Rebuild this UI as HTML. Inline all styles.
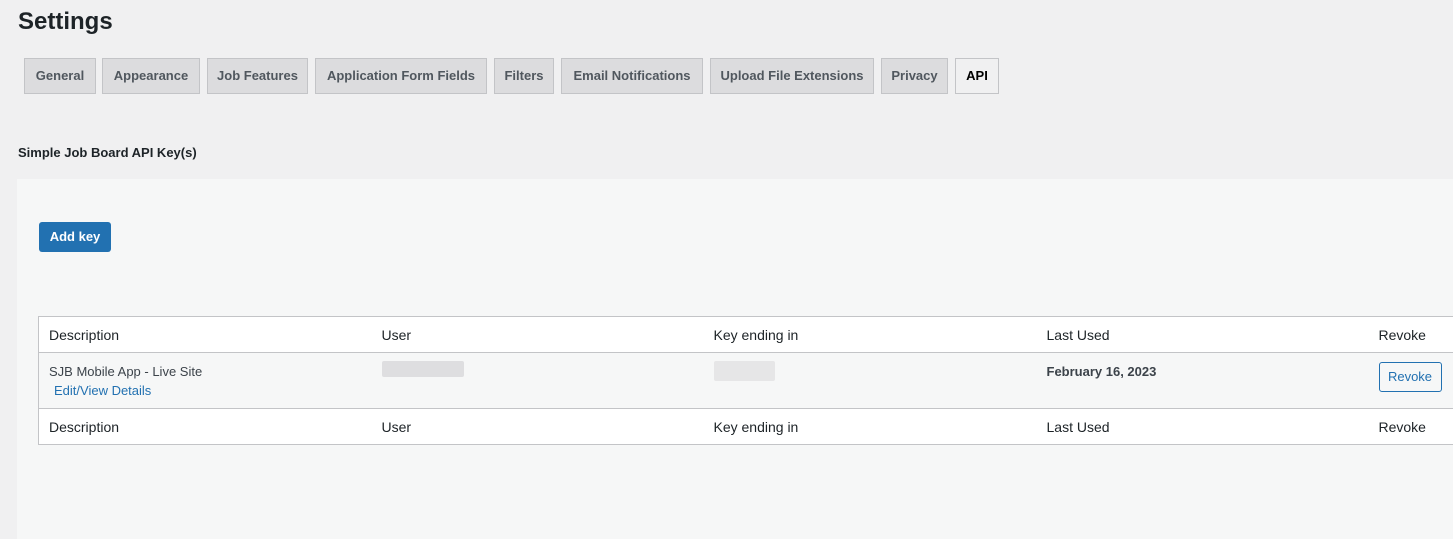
<!DOCTYPE html>
<html><head><meta charset="utf-8"><style>
*{box-sizing:border-box;margin:0;padding:0}
body{width:1453px;height:532px;overflow:hidden;background:#f0f0f1;font-family:"Liberation Sans",sans-serif;color:#1d2327;position:relative;font-size:14px}
h1{position:absolute;left:18px;top:8px;font-size:24px;font-weight:700;color:#1d2327}
.tab{position:absolute;top:58px;height:36px;background:#dcdcde;border:1px solid #c3c4c7;color:#50575e;font-weight:700;font-size:13px;line-height:34px;text-align:center}
.tab.act{background:#f0f0f1;color:#000}
.h2{position:absolute;left:18px;top:145px;font-size:13px;font-weight:700;color:#1d2327}
.panel{position:absolute;left:17px;top:179px;width:1440px;height:360px;background:#f6f7f7}
.btn{position:absolute;left:39px;top:222px;width:72px;height:30px;background:#2271b1;border-radius:3px;color:#fff;font-weight:700;font-size:13px;line-height:30px;text-align:center}
table{position:absolute;left:38px;top:316px;width:1430px;border-collapse:collapse;border:1px solid #c3c4c7;background:#fff}
td{font-size:14px;padding:0 10px;color:#1d2327}
tr.h td{height:36px}
tr.r td{background:#f6f7f7;border-top:1px solid #c3c4c7;border-bottom:1px solid #c3c4c7;vertical-align:top;padding-top:11px;height:56px;color:#3c434a;font-size:13px}
.c1{width:333px}.c2{width:332px}.c3{width:333px}.c4{width:332px}
a{color:#2271b1;text-decoration:none}
.blur{display:inline-block;background:#dedee0;border-radius:2px}
.rv{display:inline-block;border:1px solid #2271b1;color:#2271b1;border-radius:3px;width:63px;height:30px;line-height:28px;text-align:center;font-size:13px;margin-top:-2px}
</style></head><body>
<h1>Settings</h1>
<div class="tab" style="left:24px;width:72px">General</div>
<div class="tab" style="left:102px;width:98px">Appearance</div>
<div class="tab" style="left:207px;width:101px">Job Features</div>
<div class="tab" style="left:315px;width:172px">Application Form Fields</div>
<div class="tab" style="left:494px;width:60px">Filters</div>
<div class="tab" style="left:561px;width:142px">Email Notifications</div>
<div class="tab" style="left:710px;width:164px">Upload File Extensions</div>
<div class="tab" style="left:881px;width:67px">Privacy</div>
<div class="tab act" style="left:955px;width:44px">API</div>
<div class="h2">Simple Job Board API Key(s)</div>
<div class="panel"></div>
<div class="btn">Add key</div>
<table>
<tr class="h"><td class="c1">Description</td><td class="c2">User</td><td class="c3">Key ending in</td><td class="c4">Last Used</td><td>Revoke</td></tr>
<tr class="r"><td>SJB Mobile App - Live Site<br><a style="display:inline-block;margin:4px 0 0 5px;font-size:13px">Edit/View Details</a></td>
<td><span class="blur" style="width:82px;height:16px;margin-top:-3px"></span></td>
<td><span class="blur" style="width:61px;height:20px;margin-top:-3px;background:#e6e6e7"></span></td>
<td style="font-weight:600;color:#3c434a">February 16, 2023</td>
<td><span class="rv">Revoke</span></td></tr>
<tr class="h"><td>Description</td><td>User</td><td>Key ending in</td><td>Last Used</td><td>Revoke</td></tr>
</table>
</body></html>
